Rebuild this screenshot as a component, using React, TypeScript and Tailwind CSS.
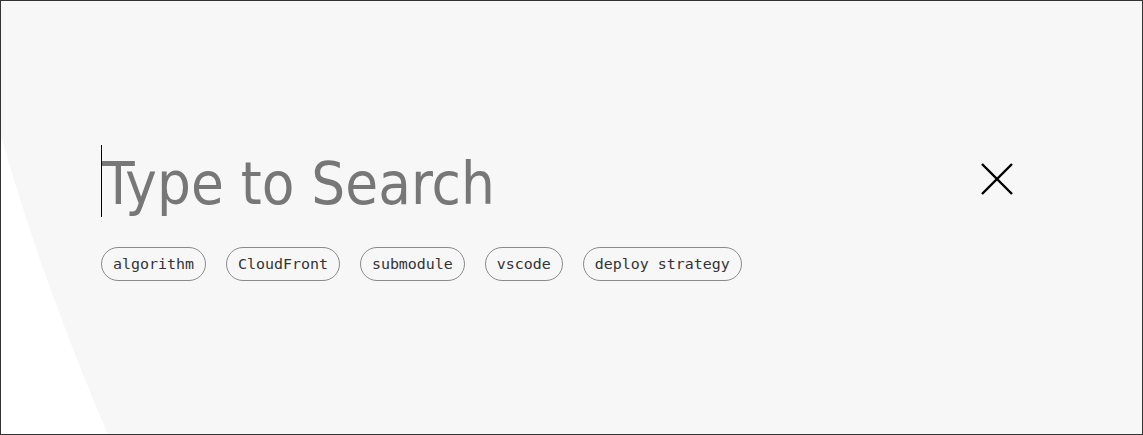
import React from "react";

const tags = ["algorithm", "CloudFront", "submodule", "vscode", "deploy strategy"];

export default function App() {
  return (
    <div className="relative h-[435px] w-full overflow-hidden border border-[#333] bg-white">
      <div className="absolute left-[-95px] top-[-2993px] h-[4904px] w-[4904px] rounded-full bg-[#f7f7f7]" />
      <div className="relative pl-[100px] pr-[128px] pt-[144px]">
        <div className="flex h-[72px] items-center">
          <div className="relative flex h-[72px] flex-1 items-center">
            <div className="absolute left-0 top-0 h-[72px] w-px bg-black" />
            <span
              className="pl-[1px] pt-[5px] text-[59.4px] leading-[72px] text-[#777] [font-stretch:condensed]"
              style={{ fontFamily: "'DejaVu Sans Condensed', 'DejaVu Sans', sans-serif" }}
            >
              Type to Search
            </span>
          </div>
          <svg width="34" height="34" viewBox="0 0 34 34" className="-mt-[4px]">
            <line x1="2" y1="2" x2="32" y2="32" stroke="#000" strokeWidth="2.4" />
            <line x1="32" y1="2" x2="2" y2="32" stroke="#000" strokeWidth="2.4" />
          </svg>
        </div>
        <div className="mt-[30px] flex gap-[20px]">
          {tags.map((t) => (
            <div
              key={t}
              className="flex h-[34px] items-center rounded-full border border-[#8a8a8a] px-[11px] text-[14.95px] text-[#333]"
              style={{ fontFamily: "'DejaVu Sans Mono', monospace" }}
            >
              {t}
            </div>
          ))}
        </div>
      </div>
    </div>
  );
}
